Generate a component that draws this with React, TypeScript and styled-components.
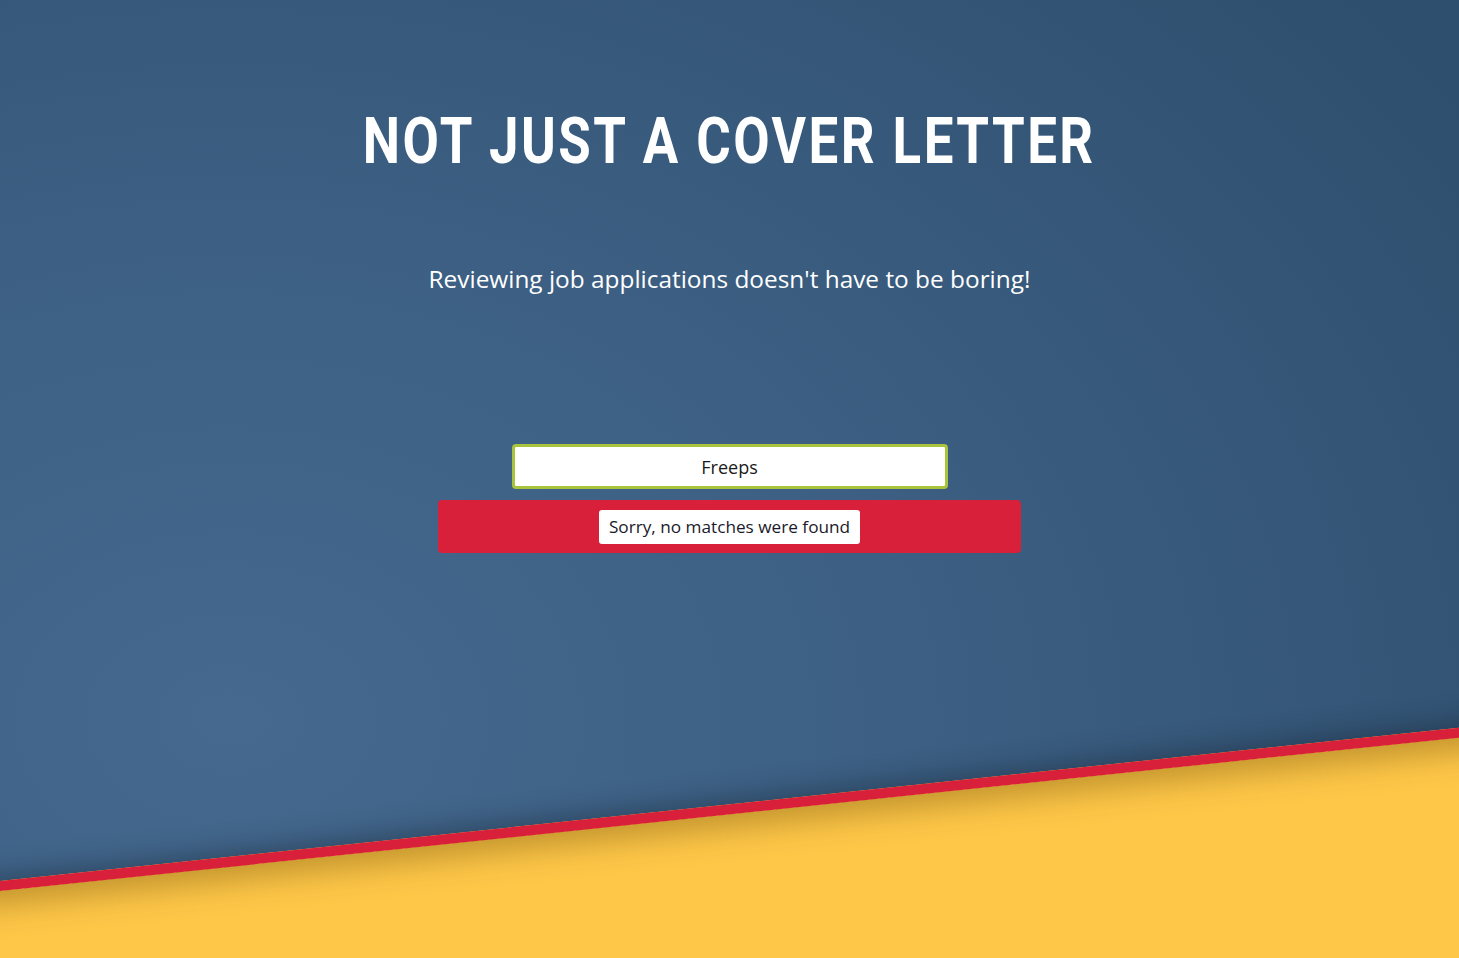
import React from "react";
import styled, { createGlobalStyle } from "styled-components";

const Global = createGlobalStyle`
  html, body { margin: 0; padding: 0; height: 100%; overflow: hidden; }
  body { font-family: "Open Sans", "Noto Sans", sans-serif; }
  #root { height: 100%; }
`;

const Page = styled.div`
  position: relative;
  width: 100%;
  height: 100vh;
  overflow: hidden;
  background: radial-gradient(
    ellipse 1500px 1100px at 230px 720px,
    #45698f 0%,
    #3c5f83 45%,
    #2f4f6e 100%
  );
`;

const Content = styled.main`
  position: relative;
  z-index: 1;
  display: flex;
  flex-direction: column;
  align-items: center;
  padding-top: 110px;
`;

const Title = styled.h1`
  margin: 0;
  font-family: Roboto, "Liberation Sans", sans-serif;
  font-weight: 700;
  font-size: 64px;
  line-height: 1;
  letter-spacing: 3px;
  color: #ffffff;
  white-space: nowrap;
  transform: scaleX(0.825);
`;

const Subtitle = styled.p`
  margin: 93px 0 0;
  font-family: "Open Sans", "Noto Sans", sans-serif;
  font-size: 24.4px;
  line-height: 1;
  color: #ffffff;
`;

const SearchInput = styled.input`
  box-sizing: border-box;
  margin-top: 153px;
  width: 436px;
  height: 45px;
  border: 3px solid #a9c33c;
  border-radius: 4px;
  background: #ffffff;
  text-align: center;
  font-family: "Open Sans", "Noto Sans", sans-serif;
  font-size: 18px;
  color: #1a1a1a;
  outline: none;
`;

const Alert = styled.div`
  box-sizing: border-box;
  margin-top: 11px;
  width: 583px;
  height: 53px;
  border-radius: 4px;
  background: #d9203a;
  display: flex;
  justify-content: center;
  padding-top: 10px;
`;

const AlertLabel = styled.span`
  box-sizing: border-box;
  height: 34px;
  padding: 0 10px;
  border-radius: 3px;
  background: #ffffff;
  font-family: "Open Sans", "Noto Sans", sans-serif;
  font-size: 17.2px;
  line-height: 34px;
  color: #1a1a2a;
`;

const Ground = styled.div`
  position: absolute;
  left: -200px;
  top: 902px;
  width: 1900px;
  height: 600px;
  background: #fec748;
  border-top: 10px solid #d9203a;
  transform-origin: 0 0;
  transform: rotate(-6deg);
  box-shadow: 0 -4px 28px rgba(20, 30, 45, 0.45),
    inset 0 22px 30px -8px rgba(90, 60, 0, 0.35);
`;

export default function App() {
  return (
    <Page>
      <Global />
      <Ground />
      <Content>
        <Title>NOT JUST A COVER LETTER</Title>
        <Subtitle>Reviewing job applications doesn't have to be boring!</Subtitle>
        <SearchInput defaultValue="Freeps" />
        <Alert>
          <AlertLabel>Sorry, no matches were found</AlertLabel>
        </Alert>
      </Content>
    </Page>
  );
}
